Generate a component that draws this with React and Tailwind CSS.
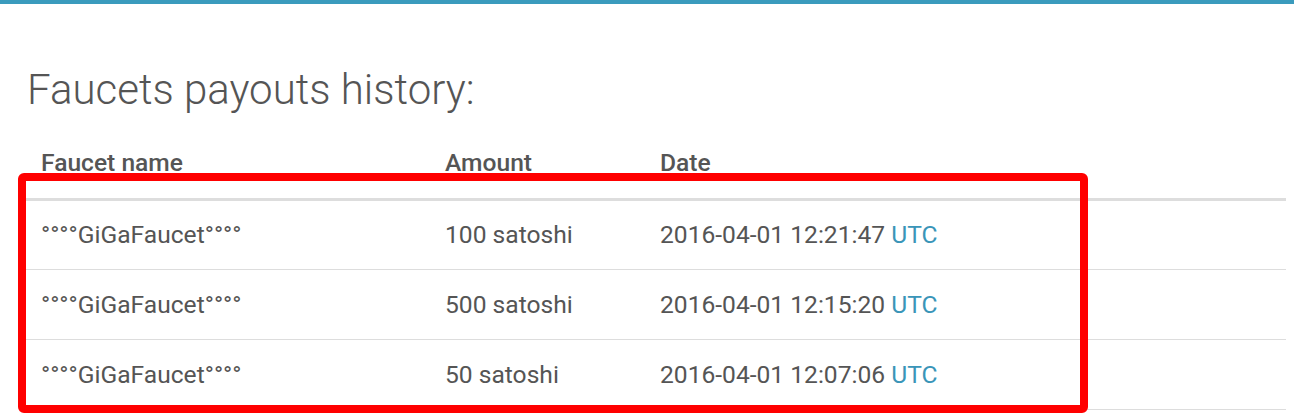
import React from 'react';

const payouts = [
  { name: '°°°°GiGaFaucet°°°°', amount: '100 satoshi', date: '2016-04-01 12:21:47' },
  { name: '°°°°GiGaFaucet°°°°', amount: '500 satoshi', date: '2016-04-01 12:15:20' },
  { name: '°°°°GiGaFaucet°°°°', amount: '50 satoshi', date: '2016-04-01 12:07:06' },
];

export default function App() {
  return (
    <div className="relative w-[1294px] h-[416px] overflow-hidden bg-white font-['Roboto',sans-serif] text-[#555]">
      <div className="h-[4px] bg-[#3a9bbd]" />

      <div className="pl-[26px] pr-[8px]">
        <h1 className="mt-[60px] pl-[1px] text-[42px] leading-[52px] font-light text-[#555]">
          Faucets payouts history:
        </h1>

        <table className="mt-[22px] w-full border-collapse">
          <thead>
            <tr className="border-b-[3px] border-[#ddd]">
              <th className="w-[404px] px-[15px] pt-[11px] pb-[21px] text-left text-[24.6px] font-medium leading-[28px]">Faucet name</th>
              <th className="w-[215px] px-[15px] pt-[11px] pb-[21px] text-left text-[24.6px] font-medium leading-[28px]">Amount</th>
              <th className="px-[15px] pt-[11px] pb-[21px] text-left text-[24.6px] font-medium leading-[28px]">Date</th>
            </tr>
          </thead>
          <tbody>
            {payouts.map((p, i) => (
              <tr key={i} className="border-b border-[#ddd]">
                <td className="h-[70px] px-[15px] text-[24.6px] leading-[28px]">{p.name}</td>
                <td className="h-[70px] px-[15px] text-[24.6px] leading-[28px]">{p.amount}</td>
                <td className="h-[70px] px-[15px] text-[24.6px] leading-[28px]">
                  {p.date} <span className="text-[#3a95b8]">UTC</span>
                </td>
              </tr>
            ))}
          </tbody>
        </table>
      </div>

      {/* highlight annotation */}
      <div className="absolute left-[18px] top-[173px] w-[1070px] h-[240px] border-[8px] border-[#ff0000] rounded-[6px]" />
    </div>
  );
}
